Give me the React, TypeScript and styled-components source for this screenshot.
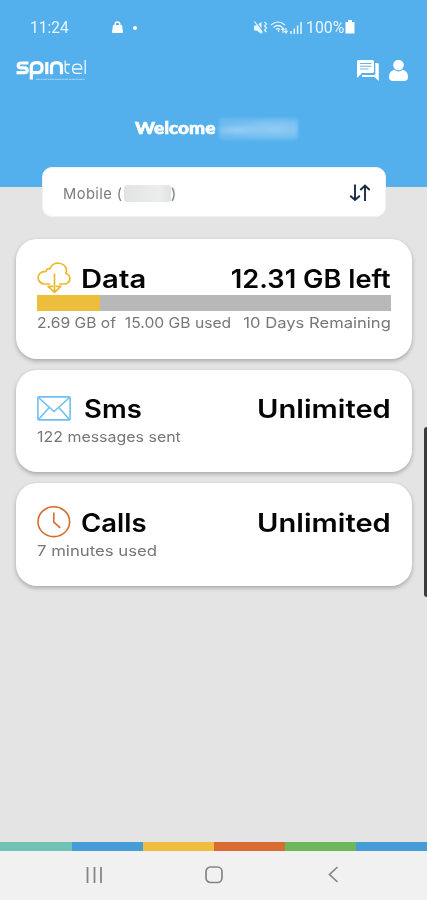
import React from "react";
import styled, { createGlobalStyle } from "styled-components";

const GlobalStyle = createGlobalStyle`
  * { box-sizing: border-box; }
  body { margin: 0; background: #e4e4e4; font-family: Inter, "Open Sans", sans-serif; }
`;

const Screen = styled.main`
  position: relative;
  display: flex;
  flex-direction: column;
  width: 427px;
  height: 900px;
  overflow: hidden;
  background: #e4e4e4;
`;

const Header = styled.header`
  display: flex;
  flex-direction: column;
  height: 187px;
  flex: none;
  background: #53b0ed;
  color: #fff;
`;

const StatusBar = styled.div`
  display: flex;
  justify-content: space-between;
  align-items: center;
  height: 20px;
  margin: 18px 72px 0 30px;
  font: 400 16px/20px Roboto, sans-serif;
  color: #e9f6ff;
`;

const StatusGroup = styled.div<{ $gap: number }>`
  display: flex;
  align-items: center;
  gap: ${(p) => p.$gap}px;
`;

const AppBar = styled.div`
  display: flex;
  justify-content: space-between;
  margin: 19px 18px 0 14px;
  height: 30px;
`;

const Actions = styled.div`
  display: flex;
  align-items: flex-start;
  gap: 9px;
  padding-top: 2px;
`;

const Welcome = styled.div`
  display: flex;
  align-items: center;
  height: 26px;
  margin: 29px 0 0 135px;
`;

const Line = styled.span<{ $size: number; $weight?: number; $stretch?: number; $right?: boolean; $spacing?: number }>`
  display: inline-block;
  white-space: pre;
  font-size: ${(p) => p.$size}px;
  font-weight: ${(p) => p.$weight ?? 400};
  letter-spacing: ${(p) => p.$spacing ?? 0}px;
  transform: scaleX(${(p) => p.$stretch ?? 1});
  transform-origin: ${(p) => (p.$right ? "right" : "left")} center;
`;

const Greeting = styled(Line)`
  width: 84px;
  margin-top: -3px;
  font-family: Lato, sans-serif;
  -webkit-text-stroke: 0.6px #fff;
`;

const HiddenName = styled.span`
  width: 79px;
  height: 22px;
  border-radius: 4px;
  background: radial-gradient(ellipse at 23% 55%, #96cef4, transparent 35%),
    radial-gradient(ellipse at 70% 50%, #94cdf3, #6bbaef 70%);
  filter: blur(1.5px);
`;

const Selector = styled.button`
  display: flex;
  align-items: center;
  flex: none;
  width: 344px;
  height: 50px;
  margin: -20px 0 0 42px;
  padding: 2px 14px 0 20px;
  border: 1px solid #f0f3f4;
  border-radius: 10px;
  background: #fff;
  color: #7c7c7c;
  font-family: inherit;
`;

const ServiceName = styled.span`
  display: flex;
  align-items: center;
  flex: 1;
`;

const HiddenNumber = styled.span`
  width: 47px;
  height: 17px;
  border-radius: 3px;
  background: linear-gradient(90deg, #e1e4e5, #ebedee 75%, #dfe3e4);
  filter: blur(0.7px);
`;

const Cards = styled.section`
  display: flex;
  flex-direction: column;
  flex: 1;
  gap: 11px;
  padding: 22px 15px 0 16px;
`;

const Card = styled.article<{ $height: number; $top: number }>`
  height: ${(p) => p.$height}px;
  padding: ${(p) => p.$top}px 21px 0;
  border-radius: 21px;
  background: #fff;
  box-shadow: 0 2px 4px rgba(0, 0, 0, 0.27);
`;

const CardHead = styled.div`
  display: flex;
  align-items: center;
  height: 34px;
  color: #050505;
  line-height: 34px;
`;

const IconSlot = styled.span<{ $gap: number }>`
  display: flex;
  margin-right: ${(p) => p.$gap}px;
`;

const Title = styled(Line)`
  padding-top: 2px;
`;

const Value = styled(Title)`
  margin-left: auto;
`;

const Meter = styled.div`
  height: 16px;
  background: #b8b8b8;
`;

const MeterFill = styled.div`
  height: 100%;
  background: #edbd3c;
`;

const Details = styled.div<{ $top?: number }>`
  display: flex;
  justify-content: space-between;
  margin-top: ${(p) => p.$top ?? 1}px;
  height: 22px;
  line-height: 22px;
  color: #777;
`;

const Stripe = styled.div`
  display: grid;
  grid-template-columns: 72px repeat(4, 71px) 1fr;
  height: 9px;
  flex: none;
`;

const Segment = styled.span<{ $color: string }>`
  background: ${(p) => p.$color};
`;

const NavBar = styled.nav`
  display: flex;
  justify-content: space-between;
  height: 49px;
  flex: none;
  padding: 14px 84px 0 83px;
  background: #f1f1f1;
`;

const EdgeHandle = styled.div`
  position: absolute;
  right: 0;
  top: 427px;
  width: 3px;
  height: 170px;
  border-radius: 4px 0 0 4px;
  background: #3c3c3c;
`;

const BagSpot = styled.span`
  display: flex;
  margin: -2px 0 0 31px;
`;

const Dot = styled.span`
  width: 4px;
  height: 4px;
  margin-left: -1px;
  border-radius: 50%;
  background: #fff;
`;

const Percent = styled(Line)`
  width: 38px;
`;

const Logo = () => (
  <svg width="76" height="32" viewBox="0 0 76 32" fill="none" stroke="#fff">
    <g strokeWidth="3.2">
      <path d="M14.5 6H7.2q-3 0-3 2.4t3 2.4h3q3 0 3 2.4t-3 2.5H2.5" />
      <path d="M17.3 22.5V10.5q0-4.8 5-4.8h1q4.8 0 4.8 5t-4.8 5h-6M32.8 5v12.2M37.5 17.2V10.5q0-4.8 5-4.8t5 4.8v6.7" />
    </g>
    <g strokeWidth="1.3" opacity=".9">
      <path d="M51.2 3.5V13q0 3.4 4 3.4M51.2 7.5H56M67.8 16.4h-5q-4.3 0-4.3-4.6 0-4.6 4.6-4.6t4.6 4.8h-9M71.2 3v14" />
    </g>
    <path d="M22 22.3H71" strokeWidth="1.3" opacity=".4" strokeDasharray="4 .6 2 .5" />
  </svg>
);

const BagIcon = () => (
  <svg width="11" height="13" viewBox="0 0 11 13">
    <path d="M1 4h9l1 7q0 1-1 1H1q-1 0-1-1z" fill="#fff" />
    <path d="M3.2 5V3.2a2.3 2.3 0 0 1 4.6 0V5" fill="none" stroke="#fff" strokeWidth="1.5" />
  </svg>
);

const StatusIcons = () => (
  <svg width="51" height="16" viewBox="0 0 51 16" fill="none" stroke="#e9f6ff" strokeWidth="1.2">
    <path d="M1 5.5h2.5L8.5 2v12l-5-3.5H1z" fill="#e9f6ff" stroke="none" />
    <path d="M2.5 1l7 9.5" stroke="#53b0ed" />
    <path d="M1.5 1.5l8 11M11.5 2l2 2-2 2 2 2-2 2 2 2" />
    <path d="M18 5q7-6 14 0M20.5 7.5q4.5-4 9 0M23 9.5q2-1.8 4 0" />
    <path d="M25 10l1 2M30 8v5M28.5 10L30 8l1.5 2M33 8v5M31.5 11l1.5 2 1.5-2" />
    <path d="M38 11v3M41.3 8.5V14M44.6 5.5V14M48 2v12" strokeWidth="1.5" />
  </svg>
);

const BatteryIcon = () => (
  <svg width="10" height="16" viewBox="0 0 10 16" fill="#fff"><path d="M3 0h4v2h2.5v11.5H.5V2H3z" /></svg>
);

const ChatIcon = () => (
  <svg width="24" height="23" viewBox="0 0 24 23" fill="#fff">
    <path d="M19.3 4h2q1.5 0 1.5 1.5V22l-4.3-4H7q-1 0-1-1v-1h11.8q1.5 0 1.5-1.5z" />
    <path d="M2.5 1h14Q18 1 18 2.5v10q0 1.5-1.5 1.5H6l-5 5V2.5Q1 1 2.5 1z" />
    <path d="M4 4.5h11.5M4 7.3h11.5M4 10h8.5" stroke="#65b8ee" strokeWidth="1.1" />
  </svg>
);

const PersonIcon = () => (
  <svg width="20" height="23" viewBox="0 0 20 23" fill="#fff">
    <circle cx="9.5" cy="6" r="5.3" />
    <path d="M5.3 10.7Q9.5 14.2 13.7 10.7q5.3 1.6 5.3 7 0 4.3-4 4.3H4q-4 0-4-4.3 0-5.4 5.3-7z" />
  </svg>
);

const SwapIcon = () => (
  <svg width="22" height="20" viewBox="0 0 22 20" fill="none" stroke="#172b46" strokeWidth="1.9">
    <path d="M6 1.5V17M1.2 12.8L6 17l4.8-4.2M16 18V2.5M11.3 7L16 2.5 20.7 7" />
  </svg>
);

const CloudIcon = () => (
  <svg width="34" height="32" viewBox="0 0 34 32" fill="none" stroke="#edb92c" strokeWidth="1.7" strokeLinecap="round" strokeLinejoin="round">
    <path d="M12.5 22H7q-3.5-.5-5.2-3.5-1.7-4 1-7 2-2.2 6.2-2.2 1-3.2 4-2.7Q15 1.5 20.5 1q8 .5 9 7 0 1.5-.6 3.5 4 1.2 4 5 0 4-4.5 5.5h-5.6" />
    <path d="M17.5 12v18.2M11 24.3l6.5 6 6.3-6M12 24.3h3.5M19.5 24.3h4" />
  </svg>
);

const EnvelopeIcon = () => (
  <svg width="34" height="25" viewBox="0 0 34 25" fill="none" stroke="#70bff1" strokeWidth="1.6">
    <rect x=".9" y=".9" width="32.2" height="23" rx="1" />
    <path d="M1.5 1.5L17 15.5 32.5 1.5M1.5 23.5l10.7-12M32.5 23.5l-10.7-12" />
  </svg>
);

const ClockIcon = () => (
  <svg width="34" height="33" viewBox="0 0 34 33" fill="none" stroke="#d76b30" strokeWidth="1.6">
    <ellipse cx="16.8" cy="15.7" rx="15.8" ry="14.9" />
    <path d="M16.8 6.5v9.6l6.5 5.7" />
  </svg>
);

const stripeColors = ["#72c1b5", "#459cd7", "#efbe3e", "#d96c35", "#6db65c", "#459cd7"];

export default function App() {
  const used = 2.69;
  const total = 15;
  return (
    <Screen>
      <GlobalStyle />
      <Header>
        <StatusBar>
          <StatusGroup $gap={11}>
            <Line $size={16} $stretch={0.97}>11:24</Line>
            <BagSpot><BagIcon /></BagSpot>
            <Dot />
          </StatusGroup>
          <StatusGroup $gap={2}>
            <StatusIcons />
            <StatusGroup $gap={1}>
              <Percent $size={16.5} $stretch={0.96}>100%</Percent>
              <BatteryIcon />
            </StatusGroup>
          </StatusGroup>
        </StatusBar>
        <AppBar>
          <Logo />
          <Actions><ChatIcon /><PersonIcon /></Actions>
        </AppBar>
        <Welcome>
          <Greeting $size={17.5} $weight={900} $stretch={1.09}>Welcome</Greeting>
          <HiddenName />
        </Welcome>
      </Header>
      <Selector>
        <ServiceName>
          <Line $size={15} $spacing={0.4} $stretch={0.98}>Mobile (</Line>
          <HiddenNumber />
          <Line $size={15}>)</Line>
        </ServiceName>
        <SwapIcon />
      </Selector>
      <Cards>
        <Card $height={120} $top={22}>
          <CardHead>
            <IconSlot $gap={10}><CloudIcon /></IconSlot>
            <Title $size={25} $weight={600} $stretch={1.17}>Data</Title>
            <Value $size={25} $weight={600} $stretch={1.09} $right>12.31 GB left</Value>
          </CardHead>
          <Meter><MeterFill style={{ width: `${(used / total) * 100}%` }} /></Meter>
          <Details>
            <Line $size={14.5} $stretch={1.08}>2.69 GB of  15.00 GB used</Line>
            <Line $size={14.5} $stretch={1.145} $right>10 Days Remaining</Line>
          </Details>
        </Card>
        <Card $height={102} $top={21}>
          <CardHead>
            <IconSlot $gap={13}><EnvelopeIcon /></IconSlot>
            <Title $size={25} $weight={600} $stretch={1.1}>Sms</Title>
            <Value $size={25} $weight={600} $stretch={1.165} $right>Unlimited</Value>
          </CardHead>
          <Details><Line $size={14.5} $stretch={1.1}>122 messages sent</Line></Details>
        </Card>
        <Card $height={103} $top={22}>
          <CardHead>
            <IconSlot $gap={10}><ClockIcon /></IconSlot>
            <Title $size={25} $weight={600} $stretch={1.1}>Calls</Title>
            <Value $size={25} $weight={600} $stretch={1.165} $right>Unlimited</Value>
          </CardHead>
          <Details><Line $size={14.5} $stretch={1.155}>7 minutes used</Line></Details>
        </Card>
      </Cards>
      <Stripe>{stripeColors.map((c, i) => <Segment key={i} $color={c} />)}</Stripe>
      <NavBar>
        <svg width="22" height="20" viewBox="0 0 22 20" stroke="#858585" strokeWidth="1.8"><path d="M4.5 2v16M11.5 2v16M18 2v16" /></svg>
        <svg width="20" height="20" viewBox="0 0 20 20" fill="none" stroke="#858585" strokeWidth="1.7"><rect x="2" y="2" width="16" height="15.5" rx="4.5" /></svg>
        <svg width="20" height="20" viewBox="0 0 20 20" fill="none" stroke="#858585" strokeWidth="1.7"><path d="M14.5 2L6.5 9.5l8 7.5" /></svg>
      </NavBar>
      <EdgeHandle />
    </Screen>
  );
}
